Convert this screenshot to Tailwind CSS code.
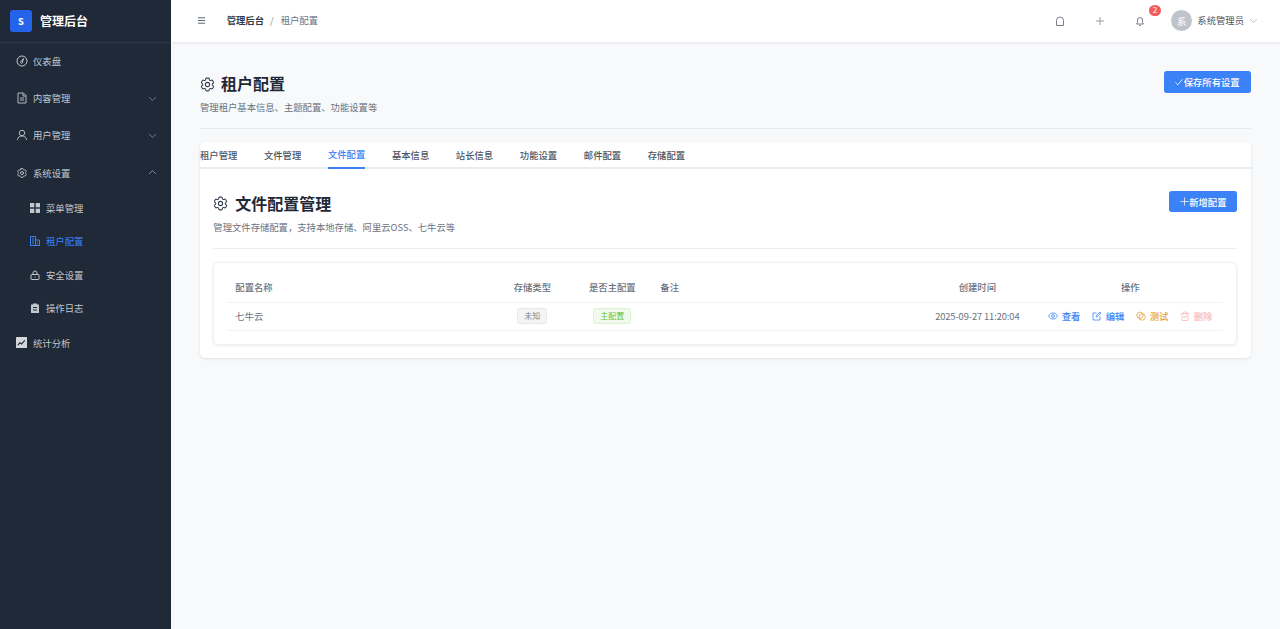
<!DOCTYPE html>
<html lang="zh">
<head>
<meta charset="utf-8">
<script src="https://cdn.jsdelivr.net/npm/@tailwindcss/browser@4"></script>
<title>租户配置</title>
</head>
<body class="font-['Noto_Sans_CJK_SC',sans-serif] text-[9.33px] bg-[#f8f9fb]">
<div class="flex h-[629px] w-[1280px] overflow-hidden">
  <aside class="w-[170.67px] shrink-0 h-full bg-[#1f2937] text-[#c2c8d0]">
    <div class="h-[42.67px] flex items-center pl-[10px] gap-[8px] border-b border-[#2c3848]">
      <div class="w-[22px] h-[22px] rounded-[3px] bg-[#2563eb] text-white flex items-center justify-center font-bold text-[9.33px]">S</div>
      <span class="text-white text-[12px] font-semibold">管理后台</span>
    </div>
    <nav class="-mt-[0.5px]">
      <div class="h-[37.33px] flex items-center pl-[16px] gap-[5px]">
        <svg class="w-[12px] h-[12px]" viewBox="0 0 24 24" fill="none" stroke="currentColor" stroke-width="2"><circle cx="12" cy="12" r="10"/><path d="M15 7l-2 7a2 2 0 1 1-3-1z" /></svg>
        <span>仪表盘</span>
      </div>
      <div class="h-[37.33px] flex items-center pl-[16px] pr-[14px] gap-[5px]">
        <svg class="w-[12px] h-[12px]" viewBox="0 0 24 24" fill="none" stroke="currentColor" stroke-width="1.8"><path d="M4 2h11l5 5v15H4zM14 2v6h6M8 12h8M8 16h8"/></svg>
        <span class="flex-1">内容管理</span>
        <svg class="w-[9px] h-[9px] text-[#8a94a3]" viewBox="0 0 24 24" fill="none" stroke="currentColor" stroke-width="2"><path d="M3 8l9 9 9-9"/></svg>
      </div>
      <div class="h-[37.33px] flex items-center pl-[16px] pr-[14px] gap-[5px]">
        <svg class="w-[12px] h-[12px]" viewBox="0 0 24 24" fill="none" stroke="currentColor" stroke-width="1.8"><circle cx="12" cy="8" r="5.5"/><path d="M3 22c0-5 4-8 9-8s9 3 9 8"/></svg>
        <span class="flex-1">用户管理</span>
        <svg class="w-[9px] h-[9px] text-[#8a94a3]" viewBox="0 0 24 24" fill="none" stroke="currentColor" stroke-width="2"><path d="M3 8l9 9 9-9"/></svg>
      </div>
      <div class="h-[37.33px] flex items-center pl-[16px] pr-[14px] gap-[5px]">
        <svg class="w-[12px] h-[12px]" viewBox="0 0 24 24" fill="none" stroke="currentColor" stroke-width="1.8" stroke-linecap="round" stroke-linejoin="round"><path d="M9.594 3.94c.09-.542.56-.94 1.11-.94h2.593c.55 0 1.02.398 1.11.94l.213 1.281c.063.374.313.686.645.87.074.04.147.083.22.127.325.196.72.257 1.075.124l1.217-.456a1.125 1.125 0 0 1 1.37.49l1.296 2.247a1.125 1.125 0 0 1-.26 1.431l-1.003.827c-.293.241-.438.613-.43.992a7.723 7.723 0 0 1 0 .255c-.008.378.137.75.43.991l1.004.827c.424.35.534.955.26 1.43l-1.298 2.247a1.125 1.125 0 0 1-1.369.491l-1.217-.456c-.355-.133-.75-.072-1.076.124a6.47 6.47 0 0 1-.22.128c-.331.183-.581.495-.644.869l-.213 1.281c-.09.543-.56.94-1.11.94h-2.594c-.55 0-1.019-.398-1.11-.94l-.213-1.281c-.062-.374-.312-.686-.644-.87a6.52 6.52 0 0 1-.22-.127c-.325-.196-.72-.257-1.076-.124l-1.217.456a1.125 1.125 0 0 1-1.369-.49l-1.297-2.247a1.125 1.125 0 0 1 .26-1.431l1.004-.827c.292-.24.437-.613.43-.991a6.932 6.932 0 0 1 0-.255c.007-.38-.138-.751-.43-.992l-1.004-.827a1.125 1.125 0 0 1-.26-1.43l1.297-2.247a1.125 1.125 0 0 1 1.37-.491l1.216.456c.356.133.751.072 1.076-.124.072-.044.146-.086.22-.128.332-.183.582-.495.644-.869l.214-1.28Z"/><circle cx="12" cy="12" r="3"/></svg>
        <span class="flex-1">系统设置</span>
        <svg class="w-[9px] h-[9px] text-[#aab2bd]" viewBox="0 0 24 24" fill="none" stroke="currentColor" stroke-width="2"><path d="M3 16l9-9 9 9"/></svg>
      </div>
      <div class="h-[33.33px] flex items-center pl-[30px] gap-[6px]">
        <svg class="w-[10px] h-[10px]" viewBox="0 0 10 10" fill="currentColor"><rect width="4.300" height="4.300"/><rect x="5.700" width="4.300" height="4.300"/><rect y="5.700" width="4.300" height="4.300"/><rect x="5.700" y="5.700" width="4.300" height="4.300"/></svg>
        <span>菜单管理</span>
      </div>
      <div class="h-[33.33px] flex items-center pl-[30px] gap-[6px] text-[#3b82f6]">
        <svg class="w-[10px] h-[10px]" viewBox="0 0 10 10" fill="none" stroke="currentColor" stroke-width="1"><path d="M.5 9.500V.5h5v9M5.500 4h4v5.500M0 9.500h10M2 3h2M2 5h2M2 7h2M7 6h1M7 8h1"/></svg>
        <span>租户配置</span>
      </div>
      <div class="h-[33.33px] flex items-center pl-[30px] gap-[6px]">
        <svg class="w-[10px] h-[10px]" viewBox="0 0 10 10" fill="none" stroke="currentColor" stroke-width="1"><rect x="1" y="4.500" width="8" height="5" rx=".5"/><path d="M3 4.500V3a2 2 0 0 1 4 0v1.500M5 6.500v1"/></svg>
        <span>安全设置</span>
      </div>
      <div class="h-[33.33px] flex items-center pl-[30px] gap-[6px]">
        <svg class="w-[10px] h-[10px]" viewBox="0 0 10 10" fill="currentColor"><path d="M1 1.500h2V.5h4v1h2V10H1zM3 4v1h4V4zM3 6.500v1h4v-1z" fill-rule="evenodd"/></svg>
        <span>操作日志</span>
      </div>
      <div class="h-[35.5px] flex items-center pl-[16px] gap-[5px]">
        <svg class="w-[11px] h-[11px] mr-[1px]" viewBox="0 0 10 10"><rect width="10" height="10" rx=".5" fill="#d3d7dc"/><path d="M1.500 7.500l2-2.200 1.500 1 3-3.300" fill="none" stroke="#1f2937" stroke-width="1"/></svg>
        <span>统计分析</span>
      </div>
    </nav>
  </aside>
  <div class="flex-1 min-w-0">
    <header class="h-[42.67px] bg-white border-b border-[#e9ebef] shadow-[0_1px_2px_rgba(0,0,0,0.04)] flex items-center pl-[26px] pr-[22px]">
      <svg class="w-[9px] h-[9px] text-[#4b5563]" viewBox="0 0 10 10" fill="none" stroke="currentColor" stroke-width="1"><path d="M1 2h8M1 5h8M1 8h8"/></svg>
      <span class="ml-[21px] pb-[2px] font-semibold text-[#333b47]">管理后台</span>
      <span class="ml-[6px] mr-[7px] pb-[2px] text-[#8a919c]">/</span>
      <span class="pb-[2px] text-[#6b7280]">租户配置</span>
      <div class="ml-auto flex items-center text-[#6b7280]">
        <svg class="w-[10px] h-[10px]" viewBox="0 0 10 10" fill="none" stroke="currentColor" stroke-width=".9"><path d="M1.500 9.500V4.500a3.500 3.500 0 0 1 7 0v5z"/></svg>
        <svg class="w-[10px] h-[10px] ml-[30px] text-[#8d939d]" viewBox="0 0 10 10" fill="none" stroke="currentColor" stroke-width=".9"><path d="M5 1v8M1 5h8"/></svg>
        <div class="relative ml-[30px] w-[10px] h-[10px]">
          <svg class="w-[10px] h-[10px]" viewBox="0 0 10 10" fill="none" stroke="currentColor" stroke-width=".9"><path d="M1.500 8h7L7.500 6.500V4a2.500 2.500 0 0 0-5 0v2.500zM4 9.300h2"/></svg>
          <span class="absolute top-[-11px] left-[14px] w-[12px] h-[11px] rounded-full bg-[#f25c5c] text-white text-[8px] leading-none flex items-center justify-center">2</span>
        </div>
        <div class="ml-[26px] w-[21.33px] h-[21.33px] rounded-full bg-[#bfc4cc] text-white text-[9.33px] flex items-center justify-center">系</div>
        <span class="ml-[5px] pb-[2px] text-[#4b5563]">系统管理员</span>
        <svg class="w-[9px] h-[9px] ml-[5px] text-[#9ca3af]" viewBox="0 0 24 24" fill="none" stroke="currentColor" stroke-width="1.800"><path d="M3 8l9 9 9-9"/></svg>
      </div>
    </header>
    <main class="px-[29.33px] pt-[28.67px]">
      <div class="flex justify-between items-start border-b border-[#e9ebef] h-[57.33px]">
        <div>
          <div class="flex items-center gap-[5px] h-[26px]">
            <svg class="w-[17px] h-[17px] -ml-[1px] text-[#374151]" viewBox="0 0 24 24" fill="none" stroke="currentColor" stroke-width="1.500" stroke-linecap="round" stroke-linejoin="round"><path d="M9.594 3.94c.09-.542.56-.94 1.11-.94h2.593c.55 0 1.02.398 1.11.94l.213 1.281c.063.374.313.686.645.87.074.04.147.083.22.127.325.196.72.257 1.075.124l1.217-.456a1.125 1.125 0 0 1 1.37.49l1.296 2.247a1.125 1.125 0 0 1-.26 1.431l-1.003.827c-.293.241-.438.613-.43.992a7.723 7.723 0 0 1 0 .255c-.008.378.137.75.43.991l1.004.827c.424.35.534.955.26 1.43l-1.298 2.247a1.125 1.125 0 0 1-1.369.491l-1.217-.456c-.355-.133-.75-.072-1.076.124a6.47 6.47 0 0 1-.22.128c-.331.183-.581.495-.644.869l-.213 1.281c-.09.543-.56.94-1.11.94h-2.594c-.55 0-1.019-.398-1.11-.94l-.213-1.281c-.062-.374-.312-.686-.644-.87a6.52 6.52 0 0 1-.22-.127c-.325-.196-.72-.257-1.076-.124l-1.217.456a1.125 1.125 0 0 1-1.369-.49l-1.297-2.247a1.125 1.125 0 0 1 .26-1.431l1.004-.827c.292-.24.437-.613.43-.991a6.932 6.932 0 0 1 0-.255c.007-.38-.138-.751-.43-.992l-1.004-.827a1.125 1.125 0 0 1-.26-1.43l1.297-2.247a1.125 1.125 0 0 1 1.37-.491l1.216.456c.356.133.751.072 1.076-.124.072-.044.146-.086.22-.128.332-.183.582-.495.644-.869l.214-1.28Z"/><circle cx="12" cy="12" r="3"/></svg>
            <h1 class="text-[16px] pb-[2px] font-semibold text-[#1f2937] leading-none">租户配置</h1>
          </div>
          <p class="mt-[3px] text-[#6b7280]">管理租户基本信息、主题配置、功能设置等</p>
        </div>
        <button class="w-[87px] h-[21.33px] rounded-[2.67px] bg-[#3b82f6] text-white font-medium flex items-center justify-center">
          <svg class="w-[8px] h-[8px] mr-[1px]" viewBox="0 0 10 10" fill="none" stroke="currentColor" stroke-width="1"><path d="M.5 5.500l3 3 6-7"/></svg>保存所有设置
        </button>
      </div>
      <section class="mt-[13px] bg-white rounded-[5px] shadow-[0_1px_3px_rgba(0,0,0,0.1)] h-[216.5px]">
        <div class="flex h-[27px] gap-[26.67px] border-b-2 border-[#e9ecf1] font-medium text-[#4b5563]">
          <span class="h-[27px] flex items-center">租户管理</span>
          <span class="h-[27px] flex items-center">文件管理</span>
          <span class="h-[27px] flex items-center text-[#3b82f6] border-b-2 border-[#3b82f6]">文件配置</span>
          <span class="h-[27px] flex items-center">基本信息</span>
          <span class="h-[27px] flex items-center">站长信息</span>
          <span class="h-[27px] flex items-center">功能设置</span>
          <span class="h-[27px] flex items-center">邮件配置</span>
          <span class="h-[27px] flex items-center">存储配置</span>
        </div>
        <div class="px-[13.33px] pt-[22.5px]">
          <div class="flex justify-between items-start border-b border-[#eceef2] h-[57.5px]">
            <div>
              <div class="flex items-center gap-[6px] h-[24px]">
                <svg class="w-[17px] h-[17px] -ml-[1px] text-[#374151]" viewBox="0 0 24 24" fill="none" stroke="currentColor" stroke-width="1.500" stroke-linecap="round" stroke-linejoin="round"><path d="M9.594 3.94c.09-.542.56-.94 1.11-.94h2.593c.55 0 1.02.398 1.11.94l.213 1.281c.063.374.313.686.645.87.074.04.147.083.22.127.325.196.72.257 1.075.124l1.217-.456a1.125 1.125 0 0 1 1.37.49l1.296 2.247a1.125 1.125 0 0 1-.26 1.431l-1.003.827c-.293.241-.438.613-.43.992a7.723 7.723 0 0 1 0 .255c-.008.378.137.75.43.991l1.004.827c.424.35.534.955.26 1.43l-1.298 2.247a1.125 1.125 0 0 1-1.369.491l-1.217-.456c-.355-.133-.75-.072-1.076.124a6.47 6.47 0 0 1-.22.128c-.331.183-.581.495-.644.869l-.213 1.281c-.09.543-.56.94-1.11.94h-2.594c-.55 0-1.019-.398-1.11-.94l-.213-1.281c-.062-.374-.312-.686-.644-.87a6.52 6.52 0 0 1-.22-.127c-.325-.196-.72-.257-1.076-.124l-1.217.456a1.125 1.125 0 0 1-1.369-.49l-1.297-2.247a1.125 1.125 0 0 1 .26-1.431l1.004-.827c.292-.24.437-.613.43-.991a6.932 6.932 0 0 1 0-.255c.007-.38-.138-.751-.43-.992l-1.004-.827a1.125 1.125 0 0 1-.26-1.43l1.297-2.247a1.125 1.125 0 0 1 1.37-.491l1.216.456c.356.133.751.072 1.076-.124.072-.044.146-.086.22-.128.332-.183.582-.495.644-.869l.214-1.28Z"/><circle cx="12" cy="12" r="3"/></svg>
                <h2 class="text-[16px] font-semibold text-[#1f2937] leading-none">文件配置管理</h2>
              </div>
              <p class="mt-[5px] text-[#6b7280]">管理文件存储配置，支持本地存储、阿里云OSS、七牛云等</p>
            </div>
            <button class="w-[68px] h-[21.33px] rounded-[2.67px] bg-[#3b82f6] text-white font-medium flex items-center justify-center">
              <svg class="w-[9px] h-[9px]" viewBox="0 0 10 10" fill="none" stroke="currentColor" stroke-width=".8"><path d="M5 .5v9M.5 5h9"/></svg>新增配置
            </button>
          </div>
          <div class="mt-[13px] rounded-[5px] border border-[#eef0f3] shadow-[0_1px_3px_rgba(0,0,0,0.08)] px-[13px] pt-[10px] h-[83px]">
            <div class="flex items-center h-[30px] border-b border-[#f0f2f5] font-medium text-[#6b7280]">
              <span class="w-[266px] pl-[8px]">配置名称</span>
              <span class="w-[78px] text-center">存储类型</span>
              <span class="w-[82px] text-center">是否主配置</span>
              <span class="w-[271px] pl-[7px]">备注</span>
              <span class="w-[106px] text-center">创建时间</span>
              <span class="flex-1 text-center pl-[7px]">操作</span>
            </div>
            <div class="flex items-center h-[28px] border-b border-[#f0f2f5] text-[#6b7280]">
              <span class="w-[266px] pl-[8px]">七牛云</span>
              <span class="w-[78px] flex justify-center"><span class="px-[6px] h-[16px] leading-[14px] border border-[#e5e7eb] rounded-[2.67px] bg-[#f4f4f5] text-[#808690] text-[8px]">未知</span></span>
              <span class="w-[82px] flex justify-center"><span class="px-[6px] h-[16px] leading-[14px] border border-[#d9f2cf] rounded-[2.67px] bg-[#f0f9eb] text-[#67c23a] text-[8px]">主配置</span></span>
              <span class="w-[271px]"></span>
              <span class="w-[106px] text-center whitespace-nowrap tracking-[-0.1px]">2025-09-27 11:20:04</span>
              <div class="flex items-center gap-[12px] pl-[18px] whitespace-nowrap font-medium">
                <span class="w-[32px] flex items-center justify-between text-[#3b82f6]"><svg class="w-[10px] h-[10px]" viewBox="0 0 10 10" fill="none" stroke="currentColor" stroke-width=".8"><path d="M.5 5C2 2.500 3.500 2 5 2s3 .5 4.500 3C8 7.500 6.500 8 5 8S2 7.500.5 5z"/><circle cx="5" cy="5" r="1.400"/></svg>查看</span>
                <span class="w-[32px] flex items-center justify-between text-[#3b82f6]"><svg class="w-[10px] h-[10px]" viewBox="0 0 10 10" fill="none" stroke="currentColor" stroke-width=".8"><path d="M8 5.500V9H1V2h3.500M4 6l.3-1.500L8 1l1 1-3.500 3.700z"/></svg>编辑</span>
                <span class="w-[32px] flex items-center justify-between text-[#e6a23c]"><svg class="w-[10px] h-[10px]" viewBox="0 0 10 10" fill="none" stroke="currentColor" stroke-width=".8"><circle cx="4" cy="4.300" r="3.200"/><circle cx="6.200" cy="6" r="3.200"/></svg>测试</span>
                <span class="w-[32px] flex items-center justify-between text-[#f9b8b8]"><svg class="w-[10px] h-[10px]" viewBox="0 0 10 10" fill="none" stroke="currentColor" stroke-width=".8"><path d="M1 2.500h8M3.500 2.500V1h3v1.500M2 2.500V9.500h6V2.500M4 4.500v3M6 4.500v3"/></svg>删除</span>
              </div>
            </div>
          </div>
        </div>
      </section>
    </main>
  </div>
</div>
</body>
</html>
